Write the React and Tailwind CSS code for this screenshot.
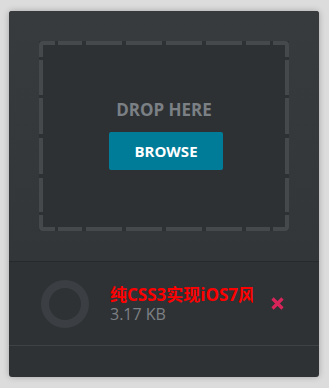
import React from "react";

const DashedFrame = () => {
  const fill = "#45494c";
  const h = [
    [19, 43],
    [47, 83],
    [87, 123],
    [127, 163],
    [167, 203],
    [207, 231],
  ];
  const v = [
    [19, 54],
    [57, 93],
    [97, 133],
    [137, 171],
  ];
  return (
    <svg
      className="absolute inset-0 pointer-events-none"
      width="250"
      height="190"
      viewBox="0 0 250 190"
    >
      {h.map(([a, b]) => (
        <g key={"h" + a}>
          <rect x={a} y={0} width={b - a} height={4} fill={fill} />
          <rect x={a} y={186} width={b - a} height={4} fill={fill} />
        </g>
      ))}
      {v.map(([a, b]) => (
        <g key={"v" + a}>
          <rect x={0} y={a} width={4} height={b - a} fill={fill} />
          <rect x={246} y={a} width={4} height={b - a} fill={fill} />
        </g>
      ))}
      <path d="M0 16V4Q0 0 4 0H16V4H4V16Z" fill={fill} />
      <path d="M250 16V4Q250 0 246 0H234V4H246V16Z" fill={fill} />
      <path d="M0 174V186Q0 190 4 190H16V186H4V174Z" fill={fill} />
      <path d="M250 174V186Q250 190 246 190H234V186H246V174Z" fill={fill} />
    </svg>
  );
};

const App = () => {
  return (
    <div
      className="w-[329px] h-[388px] bg-[#dcdcdc] pt-[11px] pl-[9px]"
      style={{ fontFamily: '"Open Sans", "Noto Sans CJK SC", sans-serif' }}
    >
      <div className="w-[310px] h-[366px] rounded-[3px] overflow-hidden bg-[#2f3235] shadow-[0_0_6px_rgba(0,0,0,0.25)] flex flex-col">
        <div className="p-[30px] bg-gradient-to-b from-[#383b3e] to-[#333639] border-b border-[#272a2d]">
          <div className="relative w-[250px] h-[190px] bg-[#2e3134] flex flex-col items-center pt-[57px]">
            <DashedFrame />
            <p className="text-[17px] font-bold text-[#7b8085] leading-[23px]">
              DROP HERE
            </p>
            <button className="mt-[11px] ml-[4px] w-[114px] h-[38px] bg-[#007c99] rounded-[2px] text-white text-[15px] font-bold">
              BROWSE
            </button>
          </div>
        </div>
        <div className="h-[84px] flex items-center border-b border-[#3e4245] pl-[32px] pr-[35px]">
          <div className="w-[48px] h-[48px] rounded-full border-[8px] border-[#3b3e42] shrink-0" />
          <div className="ml-[21px] w-[143px] overflow-hidden">
            <p className="text-[17px] font-bold text-[#ff0000] whitespace-nowrap leading-[21px]">
              纯CSS3实现iOS7风格的开关按钮
            </p>
            <p className="text-[16px] text-[#7d8084] leading-[18px]">3.17 KB</p>
          </div>
          <svg className="ml-auto" width="13" height="13" viewBox="0 0 13 13">
            <path
              d="M1.5 1.5L11.5 11.5M11.5 1.5L1.5 11.5"
              stroke="#d9245a"
              strokeWidth="3.2"
            />
          </svg>
        </div>
        <div className="flex-1" />
      </div>
    </div>
  );
};

export default App;
